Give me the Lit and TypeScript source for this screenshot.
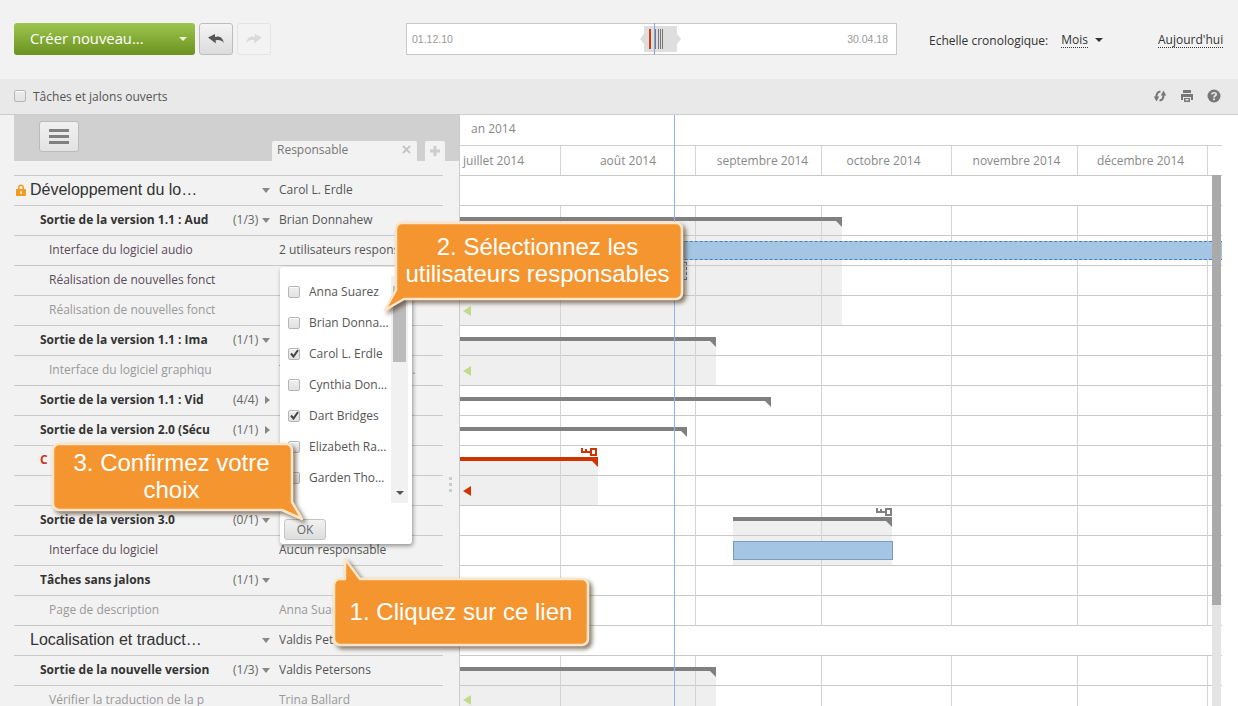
import { LitElement, html, css, svg } from "lit";
import { customElement } from "lit/decorators.js";

type Row = { l: number; name: string; count?: string; arrow?: "d" | "r"; owner?: string; tone?: string; ownerTone?: string; lock?: boolean };

const ROWS: Row[] = [
  { l: 0, name: "Développement du lo…", arrow: "d", owner: "Carol L. Erdle", lock: true },
  { l: 1, name: "Sortie de la version 1.1 : Aud", count: "(1/3)", arrow: "d", owner: "Brian Donnahew" },
  { l: 2, name: "Interface du logiciel audio", owner: "2 utilisateurs responsables", tone: "dark" },
  { l: 2, name: "Réalisation de nouvelles fonct", tone: "dark" },
  { l: 2, name: "Réalisation de nouvelles fonct", tone: "grey" },
  { l: 1, name: "Sortie de la version 1.1 : Ima", count: "(1/1)", arrow: "d" },
  { l: 2, name: "Interface du logiciel graphiqu", tone: "grey", owner: "Trina Ballard, Valdis Petersons, Anna Suarez", ownerTone: "grey" },
  { l: 1, name: "Sortie de la version 1.1 : Vid", count: "(4/4)", arrow: "r" },
  { l: 1, name: "Sortie de la version 2.0 (Sécu", count: "(1/1)", arrow: "r" },
  { l: 1, name: "C", tone: "red" },
  { l: 2, name: "" },
  { l: 1, name: "Sortie de la version 3.0", count: "(0/1)", arrow: "d" },
  { l: 2, name: "Interface du logiciel", owner: "Aucun responsable", tone: "dark" },
  { l: 1, name: "Tâches sans jalons", count: "(1/1)", arrow: "d" },
  { l: 2, name: "Page de description", owner: "Anna Suarez", tone: "grey", ownerTone: "grey" },
  { l: 0, name: "Localisation et traduct…", arrow: "d", owner: "Valdis Petersons" },
  { l: 1, name: "Sortie de la nouvelle version", count: "(1/3)", arrow: "d", owner: "Valdis Petersons" },
  { l: 2, name: "Vérifier la traduction de la p", owner: "Trina Ballard", tone: "grey", ownerTone: "grey" },
];

const MONTHS = [
  { w: 101, t: "juillet 2014", first: true, pl: 3, pr: 0 },
  { w: 135, t: "août 2014", pl: 0, pr: 0 },
  { w: 126, t: "septembre 2014", pl: 8, pr: 0 },
  { w: 130, t: "octobre 2014", pl: 0, pr: 6 },
  { w: 126, t: "novembre 2014", pl: 4, pr: 0 },
  { w: 130, t: "décembre 2014", pl: 0, pr: 4 },
  { w: 14, t: "", pl: 0, pr: 0, last: true },
];

const PEOPLE = [
  ["Anna Suarez", false],
  ["Brian Donna…", false],
  ["Carol L. Erdle", true],
  ["Cynthia Don…", false],
  ["Dart Bridges", true],
  ["Elizabeth Ra…", false],
  ["Garden Tho…", false],
] as [string, boolean][];

// canvas coordinates: x - 460, y - 175
const SHADES = [
  [0, 46, 382, 104],
  [0, 166, 256, 44],
  [0, 286, 138, 44],
  [273, 346, 159, 44],
  [0, 496, 256, 35],
];
const SUMS = [
  [0, 42, 382, "g"],
  [0, 162, 256, "g"],
  [0, 222, 311, "g"],
  [0, 252, 227, "g"],
  [0, 282, 138, "r"],
  [273, 342, 159, "g"],
  [0, 492, 256, "g"],
] as [number, number, number, string][];
const MARKS = [
  [3, 131, "g"],
  [3, 191, "g"],
  [3, 311, "r"],
  [3, 520, "g"],
] as [number, number, string][];

const key = (x: number, y: number, c: string) => svg`<svg class="abs" style="left:${x}px;top:${y}px" width="16" height="8" viewBox="0 0 16 8" fill="${c}" shape-rendering="crispEdges"><path fill-rule="evenodd" d="M9 0h7v8H9V5H0V0h2v3h2V1h2v2h3zM11 2v4h3V2z"/></svg>`;

@customElement("app-root")
export class AppRoot extends LitElement {
  static styles = css`
    :host { display: block; width: 1238px; height: 706px; position: relative; overflow: hidden; background: #fff; font-family: "Open Sans", sans-serif; font-size: 12px; color: #444; }
    * { box-sizing: border-box; }
    .abs { position: absolute; }

    .toolbar { height: 79px; background: #f2f2f2; display: flex; align-items: flex-start; padding: 23px 0 0 14px; }
    .create { width: 181px; height: 32px; border-radius: 3px; background: linear-gradient(#9dc64e, #6b9120); color: #fff; font-size: 14.8px; display: flex; align-items: center; justify-content: space-between; padding: 0 8px 2px 16px; }
    .caret { width: 0; height: 0; border-left: 4px solid transparent; border-right: 4px solid transparent; border-top: 4px solid currentColor; }
    .create .caret { color: #eef4dc; margin-top: 2px; }
    .tool { width: 34px; height: 32px; margin-left: 4px; border: 1px solid #bdbdbd; border-radius: 3px; background: linear-gradient(#f4f4f4, #dcdcdc); display: flex; align-items: center; justify-content: center; }
    .tool.off { border-color: #e4e4e4; background: #f3f3f3; }
    .range { position: relative; width: 491px; height: 32px; margin-left: 135px; background: #fff; border: 1px solid #c8c8c8; display: flex; align-items: center; justify-content: space-between; padding: 0 8px 0 5px; font-family: "Liberation Sans", sans-serif; font-size: 10.5px; color: #999; }
    .handle { position: absolute; left: 237px; top: 2px; width: 33px; height: 26px; background: #dedede; }
    .handle::before, .handle::after { content: ""; position: absolute; top: 8px; border-top: 5px solid transparent; border-bottom: 5px solid transparent; }
    .handle::before { left: -4px; border-right: 4px solid #ddd; }
    .handle::after { right: -4px; border-left: 4px solid #ddd; }
    .tick { position: absolute; top: 3px; width: 1px; height: 20px; background: #777; }
    .tick.red { background: #d03a10; width: 2px; }
    .now { position: absolute; left: 247px; top: -1px; width: 1px; height: 32px; background: #7ba4e8; }
    .scale { margin-left: 32px; height: 32px; padding-top: 2px; display: flex; align-items: center; color: #333; }
    .link { border-bottom: 1px dotted #333; line-height: 14px; }
    .mois { margin-left: 13px; }
    .scale .caret { margin-left: 7px; color: #333; }
    .today { margin-left: 55px; }

    .filter { height: 36px; background: #e9e9e9; border-bottom: 1px solid #cdcdcd; display: flex; align-items: center; padding: 0 17px 1px 14px; color: #555; font-size: 12px; }
    .check { width: 12px; height: 12px; flex: none; border: 1px solid #b5b5b5; border-radius: 2px; background: linear-gradient(#eee, #e2e2e2); box-shadow: 0 1px 0 #fff inset; display: flex; align-items: center; justify-content: center; }
    .filter .check { margin-right: 7px; }
    .filter .spacer { flex: 1; }
    .filter svg { margin-left: 13px; }

    .main { display: flex; height: 591px; }
    .left { width: 460px; background: #f2f2f2; border-right: 1px solid #ccc; flex: none; }
    .lhead { margin-left: 14px; height: 46px; background: #d0d0d0; display: flex; align-items: flex-end; }
    .menu { align-self: flex-start; margin: 6px 0 0 25px; width: 40px; height: 31px; border: 1px solid #bbb; border-radius: 3px; background: linear-gradient(#f1f1f1, #e2e2e2); display: flex; flex-direction: column; justify-content: center; align-items: center; gap: 3px; }
    .menu i { display: block; width: 20px; height: 3px; background: #808080; }
    .tab { margin-left: 193px; width: 145px; height: 20px; background: #f2f2f2; border-radius: 2px 2px 0 0; display: flex; align-items: center; justify-content: space-between; padding: 0 6px 3px 5px; color: #777; font-size: 12px; }
    .plus { margin-left: 8px; width: 20px; height: 20px; background: #f2f2f2; border-radius: 2px 2px 0 0; display: flex; align-items: center; justify-content: center; }
    .rows { margin: 14px 0 0 14px; width: 429px; }
    .row { height: 30px; border-top: 1px solid #c9c9c9; padding-bottom: 2px; display: flex; align-items: center; white-space: nowrap; color: #555; }
    .name { width: 219px; overflow: hidden; display: flex; align-items: center; flex: none; }
    .l0 .name { padding-left: 2px; font-family: "Liberation Sans", sans-serif; font-size: 16px; color: #333; }
    .l1 .name { padding-left: 26px; font-weight: 700; color: #333; }
    .l2 .name { padding-left: 35px; }
    .lockslot { width: 14px; flex: none; display: flex; }
    .dark .name { color: #5a4a5a; }
    .grey .name { color: #999; }
    .red .name { color: #c8361a; }
    .count { width: 29px; flex: none; color: #666; }
    .arr { width: 17px; flex: none; display: flex; justify-content: flex-start; padding-top: 1px; }
    .arr .d { width: 0; height: 0; border-left: 4px solid transparent; border-right: 4px solid transparent; border-top: 5px solid #888; }
    .arr .r { width: 0; height: 0; border-top: 4.5px solid transparent; border-bottom: 4.5px solid transparent; border-left: 5px solid #888; margin-left: 3px; }
    .owner { width: 137px; overflow: hidden; text-overflow: ellipsis; color: #555; }
    .owner.grey { color: #999; }

    .right { flex: 1; position: relative; background: #fff; }
    .year { height: 30px; padding: 5px 0 0 11px; color: #888; font-size: 12px; }
    .months { display: flex; width: 762px; height: 30px; border-top: 1px solid #cfcfcf; }
    .month { border-right: 1px solid #d4d4d4; display: flex; align-items: center; justify-content: center; color: #888; font-size: 12px; white-space: nowrap; padding-bottom: 1px; }
    .month.first { justify-content: flex-start; }
    .month.last, .cell.last { border-right: 0; }
    .canvas { position: relative; width: 762px; height: 531px; }
    .shade { position: absolute; background: #efefef; }
    .grid { position: relative; }
    .grow { height: 30px; border-top: 1px solid #c9c9c9; display: flex; }
    .cell { border-right: 1px solid #d4d4d4; height: 30px; }
    .sum { position: absolute; height: 4px; background: #808080; }
    .sum::after { content: ""; position: absolute; right: 0; top: 4px; border-left: 6px solid transparent; border-top: 6px solid #808080; }
    .sum.r { background: #cf3400; }
    .sum.r::after { border-top-color: #cf3400; }
    .mark { position: absolute; width: 0; height: 0; border-top: 5px solid transparent; border-bottom: 5px solid transparent; border-right: 8px solid #c2da8a; }
    .mark.r { border-right-color: #cf3400; }
    .task { position: absolute; background: #a4c6e4; }
    .task.dash { border: 1px dashed #4a7ebb; }
    .task.wide { border-right: 0; }
    .task.solid { border: 1px solid #7c9cbf; }
    .task.ghost { background: transparent; }
    .todayline { position: absolute; left: 214px; top: 0; bottom: 0; width: 1px; background: #8fb2ee; }
    .sb { position: absolute; left: 752px; top: 0; width: 9px; height: 531px; background: #e4e4e4; }
    .sb i { display: block; height: 430px; background: #aaa; }
    .grip { position: absolute; left: 449px; top: 477px; display: flex; flex-direction: column; gap: 3px; }
    .grip i { display: block; width: 3px; height: 3px; background: #ccc; }

    .popup { position: absolute; left: 280px; top: 267px; width: 132px; height: 277px; background: #fff; border-radius: 3px; box-shadow: 1px 2px 4px rgba(0,0,0,.4); padding: 9px 4px 4px 4px; display: flex; flex-direction: column; }
    .plist { display: flex; height: 227px; }
    .items { width: 107px; padding-left: 4px; }
    .item { height: 31px; display: flex; align-items: center; gap: 9px; color: #555; white-space: nowrap; }
    .track { width: 17px; background: #f1f1f1; padding: 10px 2px 8px; display: flex; flex-direction: column; justify-content: space-between; align-items: center; }
    .thumb { width: 13px; height: 76px; background: #bbb; }
    .track .caret { color: #555; }
    .ok { margin-top: 16px; width: 42px; height: 21px; border: 1px solid #c4c4c4; border-radius: 3px; background: linear-gradient(#f2f2f2, #ddd); display: flex; align-items: center; justify-content: center; color: #666; }

    .call { position: absolute; display: flex; align-items: center; justify-content: center; text-align: center; color: #fff; font-family: "Liberation Sans", sans-serif; font-size: 24px; line-height: 27px; padding-bottom: 2px; }
    .call svg { position: absolute; left: 0; top: 0; overflow: visible; filter: drop-shadow(3px 3px 2px rgba(60,40,20,.6)); }
    .call span { position: relative; }
    .c1 { left: 334px; top: 579px; width: 254px; height: 66px; }
    .c2 { left: 396px; top: 223px; width: 286px; height: 76px; padding-right: 3px; }
    .c3 { left: 53px; top: 444px; width: 239px; height: 66px; padding-right: 2px; }
  `;

  private bubble(w: number, h: number, d: string) {
    return html`<svg width=${w} height=${h} viewBox="0 0 ${w} ${h}"><path d=${d} fill="#f49530" stroke="#fde6c8" stroke-width="2.5" stroke-linejoin="round"/></svg>`;
  }

  private tick() {
    return html`<svg width="9" height="9" viewBox="0 0 9 9"><path d="M1 4.500L3.500 7.500L8 1" fill="none" stroke="#444" stroke-width="2"/></svg>`;
  }

  render() {
    return html`
      <div class="toolbar">
        <div class="create"><span>Créer nouveau...</span><i class="caret"></i></div>
        <div class="tool"><svg width="16" height="10" viewBox="0 0 16 10"><path d="M0 3.500L7 0V3C11 1.500 14.500 3 16 9C13.500 6 10.500 5.500 7.500 6.500L8 9.500Z" fill="#555"/></svg></div>
        <div class="tool off"><svg width="16" height="10" viewBox="0 0 16 10"><path d="M16 3.500L9 0V3C5 1.500 1.500 3 0 9C2.500 6 5.500 5.500 8.500 6.500L8 9.500Z" fill="#dadada"/></svg></div>
        <div class="range">
          <span>01.12.10</span><span>30.04.18</span>
          <div class="handle">
            <i class="tick red" style="left:5px"></i>
            <i class="tick" style="left:11px"></i><i class="tick" style="left:14px"></i><i class="tick" style="left:16px"></i><i class="tick" style="left:18px"></i>
          </div>
          <div class="now"></div>
        </div>
        <div class="scale">
          <span>Echelle cronologique:</span>
          <span class="link mois">Mois</span><i class="caret"></i>
          <span class="link today">Aujourd'hui</span>
        </div>
      </div>
      <div class="filter">
        <i class="check"></i><span>Tâches et jalons ouverts</span><span class="spacer"></span>
        <svg width="14" height="14" viewBox="0 0 14 14" fill="none"><path d="M7.500 2.500C5 2.500 3 4.500 3.500 9" stroke="#777" stroke-width="2"/><path d="M.8 7.500H6.200L3.500 12.500Z" fill="#777"/><path d="M6.500 11.500C9 11.500 11 9.500 10.500 5" stroke="#777" stroke-width="2"/><path d="M7.800 6.500H13.200L10.500 1.500Z" fill="#777"/></svg>
        <svg width="14" height="14" viewBox="0 0 14 14"><path fill-rule="evenodd" d="M3 1h8v3H3zM1 5h12v6h-2V8H3v3H1zM4 9h6v4H4zM5.500 10v1.500h3V10z" fill="#777"/></svg>
        <svg width="14" height="14" viewBox="0 0 14 14"><circle cx="7" cy="7" r="6.500" fill="#777"/><path d="M4.800 5.400C4.900 3.200 9.200 3.200 9.200 5.300C9.200 6.800 7 6.800 7 8.400" fill="none" stroke="#e9e9e9" stroke-width="1.700"/><rect x="6.100" y="9.400" width="1.800" height="1.800" fill="#e9e9e9"/></svg>
      </div>
      <div class="main">
        <div class="left">
          <div class="lhead">
            <div class="menu"><i></i><i></i><i></i></div>
            <div class="tab"><span>Responsable</span><svg width="9" height="9" viewBox="0 0 10 10"><path d="M1 1L9 9M9 1L1 9" stroke="#c4c4c4" stroke-width="2.200"/></svg></div>
            <div class="plus"><svg width="12" height="12" viewBox="0 0 12 12"><path d="M6 1V11M1 6H11" stroke="#ccc" stroke-width="3"/></svg></div>
          </div>
          <div class="rows">
            ${ROWS.map(r => html`
              <div class="row l${r.l} ${r.tone ?? ""}">
                <div class="name">
                  ${r.l === 0 ? html`<span class="lockslot">${r.lock ? html`<svg width="10" height="12" viewBox="0 0 10 12"><path fill-rule="evenodd" d="M2 5V3.500C2 1.500 3.400.5 5 .5S8 1.500 8 3.500V5h1.200c.4 0 .8.4.8.8v5.400c0 .4-.4.8-.8.8H.8c-.4 0-.8-.4-.8-.8V5.800c0-.4.4-.8.8-.8zM3.500 5h3V3.500C6.500 2.500 5.800 2 5 2S3.500 2.500 3.500 3.500zM4.200 7v3h1.600V7z" fill="#f49a1e"/></svg>` : ""}</span>` : ""}
                  <span>${r.name}</span>
                </div>
                <div class="count">${r.count ?? ""}</div>
                <div class="arr">${r.arrow ? html`<i class=${r.arrow}></i>` : ""}</div>
                <div class="owner ${r.ownerTone ?? ""}">${r.owner ?? ""}</div>
              </div>`)}
          </div>
        </div>
        <div class="right">
          <div class="year">an 2014</div>
          <div class="months">
            ${MONTHS.map(m => html`<div class="month ${m.first ? "first" : ""} ${m.last ? "last" : ""}" style="width:${m.w}px;padding-left:${m.pl}px;padding-right:${m.pr}px">${m.t}</div>`)}
          </div>
          <div class="canvas">
            ${SHADES.map(s => html`<div class="shade" style="left:${s[0]}px;top:${s[1]}px;width:${s[2]}px;height:${s[3]}px"></div>`)}
            <div class="grid">
              ${ROWS.map((_, i) => html`<div class="grow">
                ${i === 0 || i === 15 ? "" : MONTHS.map(m => html`<div class="cell ${m.last ? "last" : ""}" style="width:${m.w}px"></div>`)}
              </div>`)}
            </div>
            ${SUMS.map(s => html`<div class="sum ${s[3]}" style="left:${s[0]}px;top:${s[1]}px;width:${s[2]}px"></div>`)}
            ${MARKS.map(m => html`<div class="mark ${m[2]}" style="left:${m[0]}px;top:${m[1]}px"></div>`)}
            <div class="task dash wide" style="left:0;top:66px;width:762px;height:19px"></div>
            <div class="task dash ghost" style="left:120px;top:87px;width:107px;height:18px"></div>
            <div class="task solid" style="left:273px;top:366px;width:160px;height:19px"></div>
            ${key(121, 273, "#cf3400")}
            ${key(416, 333, "#808080")}
            <div class="sb"><i></i></div>
          </div>
          <div class="todayline"></div>
        </div>
      </div>
      <div class="grip"><i></i><i></i><i></i></div>

      <div class="popup">
        <div class="plist">
          <div class="items">
            ${PEOPLE.map(p => html`<div class="item"><i class="check">${p[1] ? this.tick() : ""}</i><span>${p[0]}</span></div>`)}
          </div>
          <div class="track"><div class="thumb"></div><i class="caret"></i></div>
        </div>
        <div class="ok">OK</div>
      </div>

      <div class="call c1">${this.bubble(254, 66, "M26 0H248a6 6 0 0 1 6 6V60a6 6 0 0 1-6 6H6a6 6 0 0 1-6-6V6a6 6 0 0 1 6-6H11V-20Z")}<span>1. Cliquez sur ce lien</span></div>
      <div class="call c2">${this.bubble(286, 76, "M6 0H280a6 6 0 0 1 6 6V70a6 6 0 0 1-6 6H8L-11 87L0 67V6a6 6 0 0 1 6-6Z")}<span>2. Sélectionnez les<br />utilisateurs responsables</span></div>
      <div class="call c3">${this.bubble(239, 66, "M6 0H233a6 6 0 0 1 6 6V58L249 75L229 66H6a6 6 0 0 1-6-6V6a6 6 0 0 1 6-6Z")}<span>3. Confirmez votre<br />choix</span></div>
    `;
  }
}
